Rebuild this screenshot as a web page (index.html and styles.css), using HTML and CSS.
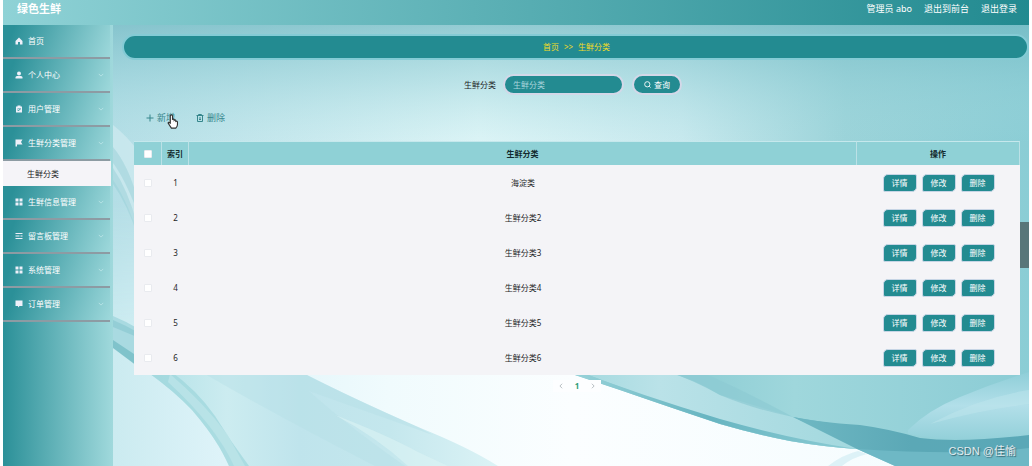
FILE: index.html
```
<!DOCTYPE html>
<html lang="zh-CN">
<head>
<meta charset="utf-8">
<title>绿色生鲜</title>
<link rel="stylesheet" href="styles.css">
</head>
<body>
<svg class="sprite" aria-hidden="true">
  <symbol id="home" viewBox="0 0 16 16"><path d="M8 1 1 8v7h5v-5h4v5h5V8z"/></symbol>
  <symbol id="user" viewBox="0 0 16 16"><circle cx="8" cy="5" r="4"/><path d="M1 15v-2q0-3 3-3h8q3 0 3 3v2z"/></symbol>
  <symbol id="clip" viewBox="0 0 16 16"><path fill-rule="evenodd" d="M2 3h3V1h6v2h3v12H2zm3 3v1h6V6zm2 6 5-4-1-1-4 3-2-1-1 1z"/></symbol>
  <symbol id="flag" viewBox="0 0 16 16"><path d="M1 1h3v14H1zM4 1h11l-3 5 3 5H4z"/></symbol>
  <symbol id="grid" viewBox="0 0 16 16"><path d="M1 1h6v6H1zM9 1h6v6H9zM1 9h6v6H1zM9 9h6v6H9z"/></symbol>
  <symbol id="board" viewBox="0 0 16 16"><path d="M1 2h14v2H1zM1 7h8v2H1zM11 7h4v2h-4zM1 12h14v2H1z"/></symbol>
  <symbol id="chat" viewBox="0 0 16 16"><path d="M1 1h14v11H9l-3 3v-3H1z"/></symbol>
  <symbol id="down" viewBox="0 0 16 16"><path d="m2 5 6 6 6-6" fill="none" stroke="currentColor" stroke-width="2"/></symbol>
</svg>
<div class="app">
  <header class="topbar">
    <h1 class="brand">绿色生鲜</h1>
    <nav class="account"><span>管理员 abo</span><a href="#">退出到前台</a><a href="#">退出登录</a></nav>
  </header>
  <div class="body">
    <nav class="sidebar">
      <a class="item" href="#"><svg class="icon"><use href="#home"/></svg>首页</a>
      <a class="item" href="#"><svg class="icon"><use href="#user"/></svg>个人中心<svg class="caret"><use href="#down"/></svg></a>
      <a class="item" href="#"><svg class="icon"><use href="#clip"/></svg>用户管理<svg class="caret"><use href="#down"/></svg></a>
      <a class="item" href="#"><svg class="icon"><use href="#flag"/></svg>生鲜分类管理<svg class="caret"><use href="#down"/></svg></a>
      <a class="subitem" href="#">生鲜分类</a>
      <a class="item" href="#"><svg class="icon"><use href="#grid"/></svg>生鲜信息管理<svg class="caret"><use href="#down"/></svg></a>
      <a class="item" href="#"><svg class="icon"><use href="#board"/></svg>留言板管理<svg class="caret"><use href="#down"/></svg></a>
      <a class="item" href="#"><svg class="icon"><use href="#grid"/></svg>系统管理<svg class="caret"><use href="#down"/></svg></a>
      <a class="item" href="#"><svg class="icon"><use href="#chat"/></svg>订单管理<svg class="caret"><use href="#down"/></svg></a>
    </nav>
    <main class="main">
      <svg class="backdrop" viewBox="113 25 916 441" preserveAspectRatio="none" aria-hidden="true">
        <defs>
          <linearGradient id="sky" x1="0" x2="1" y1="0" y2="0"><stop offset="0" stop-color="#b4dee6"/><stop offset=".4" stop-color="#dcf4f6"/><stop offset=".62" stop-color="#c8e9ee"/><stop offset=".8" stop-color="#9bd3d9"/><stop offset="1" stop-color="#8bcdd5"/></linearGradient>
          <linearGradient id="shade" x1="0" x2="0" y1="0" y2="1"><stop offset="0" stop-color="#6db6c0" stop-opacity=".65"/><stop offset=".13" stop-color="#8ccbd3" stop-opacity=".4"/><stop offset=".27" stop-color="#a5dbe0" stop-opacity="0"/></linearGradient>
          <linearGradient id="floor" x1="0" x2="1" y1="0" y2="0"><stop offset="0" stop-color="#cbebf0"/><stop offset=".12" stop-color="#def3f9"/><stop offset=".3" stop-color="#f0fbfd"/><stop offset=".5" stop-color="#fbfeff"/><stop offset="1" stop-color="#f3fcfe"/></linearGradient>
          <linearGradient id="fade" x1="0" x2="0" y1="0" y2="1"><stop offset="0" stop-color="#fff" stop-opacity="0"/><stop offset="1" stop-color="#fff"/></linearGradient>
          <mask id="rise"><path fill="url(#fade)" d="M113 200h447v130H113z"/><path fill="#fff" d="M113 329h877v137H113z"/></mask>
          <linearGradient id="veil" x1="0" x2="1" y1="0" y2="0"><stop offset="0" stop-color="#aedfe5"/><stop offset=".25" stop-color="#ccecf0"/><stop offset=".45" stop-color="#bfe4ec"/><stop offset=".7" stop-color="#c4e7ed"/><stop offset="1" stop-color="#dcf3f6"/></linearGradient>
          <linearGradient id="sheet" x1="0" x2="1" y1="0" y2="0"><stop offset="0" stop-color="#8bcdd5"/><stop offset=".3" stop-color="#8fced5"/><stop offset=".5" stop-color="#9fd7dc"/><stop offset="1" stop-color="#8bccd5"/></linearGradient>
          <linearGradient id="light" x1="0" x2="1" y1="0" y2="0"><stop offset="0" stop-color="#a4d9df"/><stop offset=".3" stop-color="#bae2e8"/><stop offset="1" stop-color="#a2d8de"/></linearGradient>
          <linearGradient id="edge" x1="0" x2="1" y1="0" y2="0"><stop offset="0" stop-color="#9cd5db"/><stop offset=".5" stop-color="#68b5c1"/><stop offset="1" stop-color="#8cccd4"/></linearGradient>
          <linearGradient id="fold" x1="0" x2="1" y1="0" y2="0"><stop offset="0" stop-color="#6fb8c3"/><stop offset=".5" stop-color="#5ba8b6"/><stop offset="1" stop-color="#5aa8b7"/></linearGradient>
          <linearGradient id="gleam" x1="0" x2="0" y1="0" y2="1"><stop offset="0" stop-color="#8fced8"/><stop offset=".5" stop-color="#b2dfe9"/><stop offset="1" stop-color="#93d0d9"/></linearGradient>
        </defs>
        <path fill="url(#sky)" d="M113 25h916v441H113z"/>
        <path fill="url(#shade)" d="M113 25h916v441H113z"/>
        <path fill="#d3edf2" opacity=".6" d="M113 125q15 12 24 25v80q-13-35-24-50z"/>
        <path fill="#8ecad3" opacity=".4" d="M113 147q15 18 24 50v14q-12-32-24-48zM113 168q15 22 24 56v10q-10-30-24-50z"/>
        <path fill="url(#floor)" mask="url(#rise)" d="M113 200h916v266H113z"/>
        <path fill="#a9dae1" d="M113 316q12 5 24 12v36q-12-10-24-18z"/>
        <path fill="#80c3cb" d="M113 340q12 8 24 16v10q-12-9-24-18z"/>
        <path fill="#8cc9d1" opacity=".7" d="M113 320q12 5 24 12v5l-24-10z"/>
        <path fill="url(#veil)" d="M137 364l13 10q24 17 42 36 17 20 26 35 5 8 11 21h269q-30-19-80-39-66-29-113-53z"/>
        <path fill="#9dd5db" opacity=".7" d="M145 370h24q28 20 46 46 16 26 34 50h-20q-6-13-11-21-9-15-26-35-18-19-47-40z"/>
        <path fill="#bfe5ea" opacity=".7" d="M170 374q33 28 57 60l18 32h-11q-18-40-66-84z"/>
        <path fill="#b3dfe7" opacity=".4" d="M205 374h100q47 24 113 53l15 8q-68-24-124-44 40 36 96 75h-30q-96-49-170-92z"/>
        <path fill="#e0f5f6" opacity=".5" d="M335 415q52 20 83 37l30 14h-40q-30-28-73-51z"/>
        <path fill="url(#sheet)" d="M560 370h469v96H895l-38-17q-32-2-67-8-32-6-70-17-48-16-100-34z"/>
        <path fill="url(#light)" d="M575 370h85q35 9 60 25l73 22 64 32q-32-2-67-8-32-6-70-17z"/>
        <path fill="#8dcbd3" opacity=".7" d="M665 370l40 4q30 12 88 43-40-8-73-22-25-14-55-25z"/>
        <path fill="url(#edge)" d="M560 370h15q65 25 145 49 70 20 137 30-32-2-67-8-32-6-70-17-48-16-100-34z"/>
        <path fill="url(#gleam)" d="M908 430q20-20 52-33 34-14 69-25v64q-70 8-121-2z"/>
        <path fill="#c1e6ee" opacity=".45" d="M930 424q48-26 99-34v14q-50 6-99 20z"/>
        <path fill="#6eb8c5" d="M793 417q60 26 64 32l38 17h134v-24l-100-2z"/>
        <path fill="url(#fold)" d="M793 417q24 5 67 8 30 4 60 13 40 5 109-3v13q-60 8-172 1z"/>
        <path fill="#c9eaf0" opacity=".55" d="M828 466q14-11 30-15l9 3q-16 4-25 12z"/>
      </svg>
      <div class="crumbs"><a href="#">首页</a><span>&gt;&gt;</span><span>生鲜分类</span></div>
      <form class="search">
        <label for="category">生鲜分类</label>
        <input id="category" type="text" placeholder="生鲜分类">
        <button type="button"><svg class="glass" viewBox="0 0 16 16"><circle cx="7.5" cy="7.5" r="6"/><path d="m12 12 3 3"/></svg>查询</button>
      </form>
      <div class="tools">
        <button type="button"><svg class="line" viewBox="0 0 16 16"><path d="M8 1v14M1 8h14"/></svg>新增
          <svg class="pointer" viewBox="0 0 20 26"><path d="M6 14V3q0-2 2-2t2 2v7q1-2 3-1v2q2-2 3 0v2q3-1 3 1v5q0 3-3 6H8l-6-9q0-3 4 0z"/></svg>
        </button>
        <button type="button"><svg class="line" viewBox="0 0 16 16"><path d="M1 3h14M5 3V1h6v2M3 3v12h10V3M6 8h4M6 11h4"/></svg>删除</button>
      </div>
      <table class="grid">
        <colgroup><col class="c-check"><col class="c-index"><col><col class="c-ops"></colgroup>
        <thead><tr><th><input type="checkbox" aria-label="全选"></th><th>索引</th><th>生鲜分类</th><th>操作</th></tr></thead>
        <tbody>
          <tr><td><input type="checkbox" aria-label="选择 1"></td><td>1</td><td>海淀类</td><td><div class="ops"><button>详情</button><button>修改</button><button>删除</button></div></td></tr>
          <tr><td><input type="checkbox" aria-label="选择 2"></td><td>2</td><td>生鲜分类2</td><td><div class="ops"><button>详情</button><button>修改</button><button>删除</button></div></td></tr>
          <tr><td><input type="checkbox" aria-label="选择 3"></td><td>3</td><td>生鲜分类3</td><td><div class="ops"><button>详情</button><button>修改</button><button>删除</button></div></td></tr>
          <tr><td><input type="checkbox" aria-label="选择 4"></td><td>4</td><td>生鲜分类4</td><td><div class="ops"><button>详情</button><button>修改</button><button>删除</button></div></td></tr>
          <tr><td><input type="checkbox" aria-label="选择 5"></td><td>5</td><td>生鲜分类5</td><td><div class="ops"><button>详情</button><button>修改</button><button>删除</button></div></td></tr>
          <tr><td><input type="checkbox" aria-label="选择 6"></td><td>6</td><td>生鲜分类6</td><td><div class="ops"><button>详情</button><button>修改</button><button>删除</button></div></td></tr>
        </tbody>
      </table>
      <div class="pager">
        <button type="button" aria-label="上一页"><svg viewBox="0 0 16 16"><path d="m11 2-6 6 6 6"/></svg></button>
        <button type="button" class="current">1</button>
        <button type="button" aria-label="下一页"><svg viewBox="0 0 16 16"><path d="m5 2 6 6-6 6"/></svg></button>
      </div>
      <div class="handle"></div>
      <div class="watermark">CSDN @佳愉</div>
    </main>
  </div>
</div>
</body>
</html>
```
FILE: styles.css
```
* { box-sizing: border-box; }
body {
  margin: 0;
  padding: 0 3px;
  background: #fff;
  color: #1c2426;
  font: 8px/12px "Noto Sans", "Noto Sans CJK SC", sans-serif;
}
a { color: inherit; text-decoration: none; }
button, input { margin: 0; padding: 0; border: 0; font: inherit; color: inherit; }
button { background: none; cursor: pointer; }
.sprite { position: absolute; width: 0; height: 0; }
.app { display: flex; flex-direction: column; min-height: 100vh; }

.topbar {
  display: flex;
  justify-content: space-between;
  align-items: center;
  height: 25px;
  padding: 0 12px 7px 14px;
  color: #fff;
  background: linear-gradient(90deg, #8fd2d6, #228a90);
}
.brand { margin: 0; font-size: 11px; line-height: 18px; font-weight: 700; }
.account { display: flex; gap: 12px; font-size: 9px; }

.body { flex: 1; display: flex; }
.sidebar { flex: 0 0 110px; background: linear-gradient(90deg, #2b9098, #a0d9dc); }
.item {
  display: flex;
  align-items: center;
  height: 34px;
  margin-right: 3px;
  padding: 0 6px 0 12px;
  color: #fff;
  border-bottom: 2px solid #8d9ba3;
  background: linear-gradient(110deg, #2b9098 10%, #9dd8db);
}
.icon { width: 8px; height: 8px; margin-right: 5px; fill: #eef0fa; }
.caret { width: 6px; height: 6px; margin-left: auto; color: #c0e8ea; }
.subitem {
  display: flex;
  align-items: center;
  height: 25px;
  margin-right: 2px;
  padding-left: 24px;
  color: #1c2426;
  background: #f5f4f8;
}

.main { position: relative; flex: 1; min-width: 0; padding: 9px 0 0; overflow: hidden; }
.backdrop { position: absolute; inset: 0; width: 100%; height: 100%; z-index: -1; }
.crumbs {
  display: flex;
  justify-content: center;
  align-items: center;
  gap: 5px;
  height: 26px;
  margin-left: 9px;
  padding-left: 2px;
  color: #f2dc27;
  background: #238b91;
  border: 2px solid #84cbd5;
  border-radius: 13px;
}
.search { display: flex; justify-content: center; align-items: center; margin-top: 14px; padding-left: 4px; }
.search input, .search button {
  height: 21px;
  color: #fff;
  background: #238b91;
  border: 2px solid #d3d8e8;
  border-radius: 11px;
}
.search input { width: 121px; margin: 0 8px 0 7px; padding: 0 8px; }
.search input::placeholder { color: #a9d5dc; opacity: 1; }
.search button { display: flex; align-items: center; justify-content: center; gap: 3px; width: 50px; }
.glass { width: 7px; height: 7px; fill: none; stroke: #fff; stroke-width: 2; }
.tools { display: flex; gap: 21px; margin: 17px 0 0 33px; color: #36868c; font-size: 9px; }
.tools button { position: relative; display: flex; align-items: center; gap: 3px; height: 12px; }
.line { width: 8px; height: 8px; fill: none; stroke: #36868c; stroke-width: 2; }
.pointer { position: absolute; left: 21px; top: 2px; width: 11px; height: 15px; fill: #fff; stroke: #333; stroke-width: 2; }

.grid {
  width: calc(100% - 30px);
  margin: 17px 9px 0 21px;
  table-layout: fixed;
  border-collapse: separate;
  border-spacing: 0;
  text-align: center;
  background: #f4f4f7;
}
.c-check { width: 28px; }
.c-index { width: 27px; }
.c-ops { width: 163px; }
.grid th { height: 24px; padding: 0; color: #132a2d; background: #8fd1d6; border-top: 1px solid #c5e8ec; border-right: 1px solid #bbe1e6; }
.grid td { height: 35px; padding: 0; }
.grid input { display: block; appearance: none; width: 8px; height: 8px; margin: 0 auto; background: #fff; border: 1px solid #e9ebef; border-radius: 1px; }
.ops { display: flex; justify-content: center; gap: 5px; }
.ops button {
  width: 34px;
  height: 18px;
  color: #fff;
  background: #238b91;
  border: 1px solid #c6d5e5;
  border-radius: 5px 2px;
}

.pager { display: flex; width: 48px; height: 12px; margin: 5px auto 0 440px; background: #fdfeff; }
.pager button { display: flex; flex: 1; align-items: center; justify-content: center; }
.pager svg { width: 6px; height: 6px; fill: none; stroke: #a0a8ad; stroke-width: 2; }
.pager .current { color: #2c9c76; font-weight: 700; }
.handle { position: absolute; right: 0; top: 197px; width: 9px; height: 46px; background: #587679; }
.watermark { position: absolute; right: 13px; bottom: 7px; color: #e1ecef; font: 11px/16px "Liberation Sans", "Noto Sans CJK SC", sans-serif; text-shadow: 1px 1px 1px #35616c; }
```
